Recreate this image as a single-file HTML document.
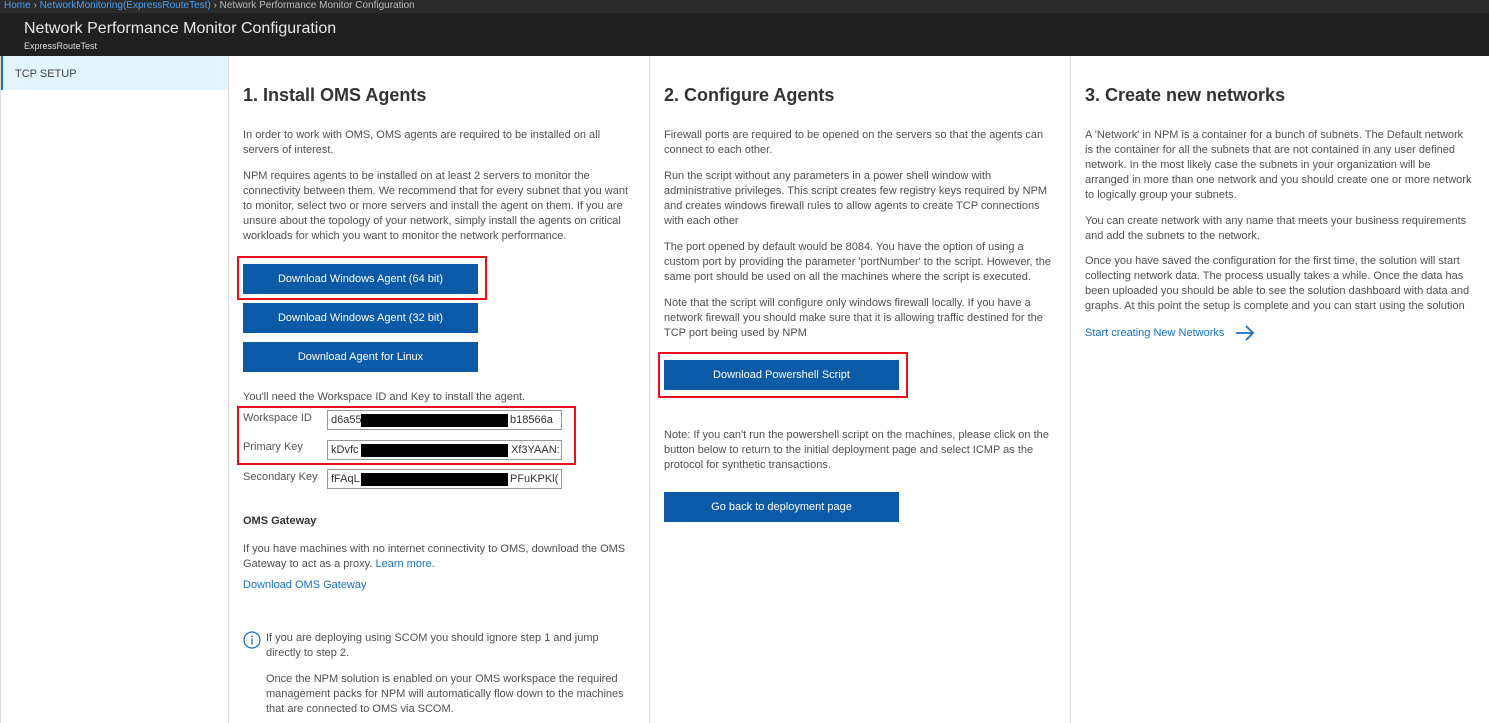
<!DOCTYPE html>
<html><head><meta charset="utf-8"><style>
*{margin:0;padding:0;box-sizing:border-box}
body{width:1489px;height:723px;overflow:hidden;background:#fff;font-family:"Liberation Sans",sans-serif;font-size:11px;color:#444;position:relative}
.a{position:absolute}
p.t{position:absolute;line-height:15px;color:#505050;font-size:11px}
h2{position:absolute;font-size:18px;font-weight:bold;color:#333}
.btn{position:absolute;background:#0b5aa8;color:#fff;text-align:center;line-height:30px;height:30px;width:235px;font-size:11px}
.red{position:absolute;border:2px solid #e8101a}
.lbl{position:absolute;color:#555;font-size:11px}
.in{position:absolute;border:1px solid #999;height:20px;width:235px;font-size:11px;line-height:18px;padding-left:3px;color:#333;overflow:hidden;white-space:nowrap}
.blk{position:absolute;background:#000;height:13px;top:3px}
a{color:#1a6fc0;text-decoration:none}
</style></head><body>
<div class="a" style="left:0;top:0;width:1489px;height:13px;background:#2b2b2b"></div>
<div class="a" style="left:4px;top:0;font-size:10px;line-height:12px;color:#bbb"><span style="color:#4a9ff0">Home</span> › <span style="color:#4a9ff0">NetworkMonitoring(ExpressRouteTest)</span> › Network Performance Monitor Configuration</div>
<div class="a" style="left:0;top:13px;width:1489px;height:43px;background:#202020"></div>
<div class="a" style="left:24px;top:20px;font-size:16px;color:#e8e8e8">Network Performance Monitor Configuration</div>
<div class="a" style="left:24px;top:41px;font-size:9px;color:#ddd">ExpressRouteTest</div>

<div class="a" style="left:0;top:56px;width:229px;height:34px;background:#e2f4fd;border-left:3px solid #1a6fc0"></div>
<div class="a" style="left:15px;top:68px;font-size:11px;color:#444">TCP SETUP</div>
<div class="a" style="left:0;top:56px;width:1px;height:667px;background:#ddd"></div>
<div class="a" style="left:228px;top:56px;width:1px;height:667px;background:#ddd"></div>
<div class="a" style="left:649px;top:56px;width:1px;height:667px;background:#ddd"></div>
<div class="a" style="left:1070px;top:56px;width:1px;height:667px;background:#ddd"></div>

<h2 style="left:243px;top:85px">1. Install OMS Agents</h2>
<p class="t" style="left:243px;top:128px;width:385px">In order to work with OMS, OMS agents are required to be installed on all servers of interest.</p>
<p class="t" style="left:243px;top:169px;width:392px">NPM requires agents to be installed on at least 2 servers to monitor the connectivity between them. We recommend that for every subnet that you want to monitor, select two or more servers and install the agent on them. If you are unsure about the topology of your network, simply install the agents on critical workloads for which you want to monitor the network performance.</p>
<div class="red" style="left:237px;top:256px;width:250px;height:44px"></div>
<div class="btn" style="left:243px;top:264px">Download Windows Agent (64 bit)</div>
<div class="btn" style="left:243px;top:303px">Download Windows Agent (32 bit)</div>
<div class="btn" style="left:243px;top:342px">Download Agent for Linux</div>
<p class="t" style="left:243px;top:390px">You'll need the Workspace ID and Key to install the agent.</p>
<div class="red" style="left:237px;top:406px;width:339px;height:59px"></div>
<div class="lbl" style="left:243px;top:412px">Workspace ID</div>
<div class="in" style="left:327px;top:410px">d6a55<span class="blk" style="left:33px;width:147px"></span><span style="position:absolute;left:182px">b18566a</span></div>
<div class="lbl" style="left:243px;top:441px">Primary Key</div>
<div class="in" style="left:327px;top:440px">kDvfc<span class="blk" style="left:33px;width:147px"></span><span style="position:absolute;left:183px">Xf3YAAN:</span></div>
<div class="lbl" style="left:243px;top:471px">Secondary Key</div>
<div class="in" style="left:327px;top:469px">fFAqL<span class="blk" style="left:33px;width:147px"></span><span style="position:absolute;left:182px">PFuKPKl(</span></div>
<div class="a" style="left:243px;top:515px;font-weight:bold;color:#333">OMS Gateway</div>
<p class="t" style="left:243px;top:542px;width:395px">If you have machines with no internet connectivity to OMS, download the OMS Gateway to act as a proxy. <a>Learn more.</a></p>
<p class="t" style="left:243px;top:578px"><a>Download OMS Gateway</a></p>
<svg class="a" style="left:243px;top:631px" width="18" height="18" viewBox="0 0 18 18"><circle cx="9" cy="9" r="8" fill="none" stroke="#1a6fc0" stroke-width="1.2"/><circle cx="9" cy="5.3" r="0.9" fill="#1a6fc0"/><path d="M9 7.5V13.5" stroke="#1a6fc0" stroke-width="1.3"/></svg>
<p class="t" style="left:266px;top:631px;width:350px">If you are deploying using SCOM you should ignore step 1 and jump directly to step 2.</p>
<p class="t" style="left:266px;top:672px;width:375px">Once the NPM solution is enabled on your OMS workspace the required management packs for NPM will automatically flow down to the machines that are connected to OMS via SCOM.</p>

<h2 style="left:664px;top:85px">2. Configure Agents</h2>
<p class="t" style="left:664px;top:128px;width:395px">Firewall ports are required to be opened on the servers so that the agents can connect to each other.</p>
<p class="t" style="left:664px;top:169px;width:395px">Run the script without any parameters in a power shell window with administrative privileges. This script creates few registry keys required by NPM and creates windows firewall rules to allow agents to create TCP connections with each other</p>
<p class="t" style="left:664px;top:240px;width:395px">The port opened by default would be 8084. You have the option of using a custom port by providing the parameter 'portNumber' to the script. However, the same port should be used on all the machines where the script is executed.</p>
<p class="t" style="left:664px;top:296px;width:395px">Note that the script will configure only windows firewall locally. If you have a network firewall you should make sure that it is allowing traffic destined for the TCP port being used by NPM</p>
<div class="red" style="left:658px;top:352px;width:250px;height:46px"></div>
<div class="btn" style="left:664px;top:360px">Download Powershell Script</div>
<p class="t" style="left:664px;top:428px;width:395px">Note: If you can't run the powershell script on the machines, please click on the button below to return to the initial deployment page and select ICMP as the protocol for synthetic transactions.</p>
<div class="btn" style="left:664px;top:492px">Go back to deployment page</div>

<h2 style="left:1085px;top:85px">3. Create new networks</h2>
<p class="t" style="left:1085px;top:128px;width:388px">A 'Network' in NPM is a container for a bunch of subnets. The Default network is the container for all the subnets that are not contained in any user defined network. In the most likely case the subnets in your organization will be arranged in more than one network and you should create one or more network to logically group your subnets.</p>
<p class="t" style="left:1085px;top:214px;width:395px">You can create network with any name that meets your business requirements and add the subnets to the network.</p>
<p class="t" style="left:1085px;top:254px;width:400px">Once you have saved the configuration for the first time, the solution will start collecting network data. The process usually takes a while. Once the data has been uploaded you should be able to see the solution dashboard with data and graphs. At this point the setup is complete and you can start using the solution</p>
<p class="t" style="left:1085px;top:326px"><a>Start creating New Networks</a></p>
<svg class="a" style="left:1235px;top:324px" width="20" height="18" viewBox="0 0 20 18"><path d="M1 9H18M11 2L18 9L11 16" fill="none" stroke="#1a6fc0" stroke-width="1.8"/></svg>
</body></html>
